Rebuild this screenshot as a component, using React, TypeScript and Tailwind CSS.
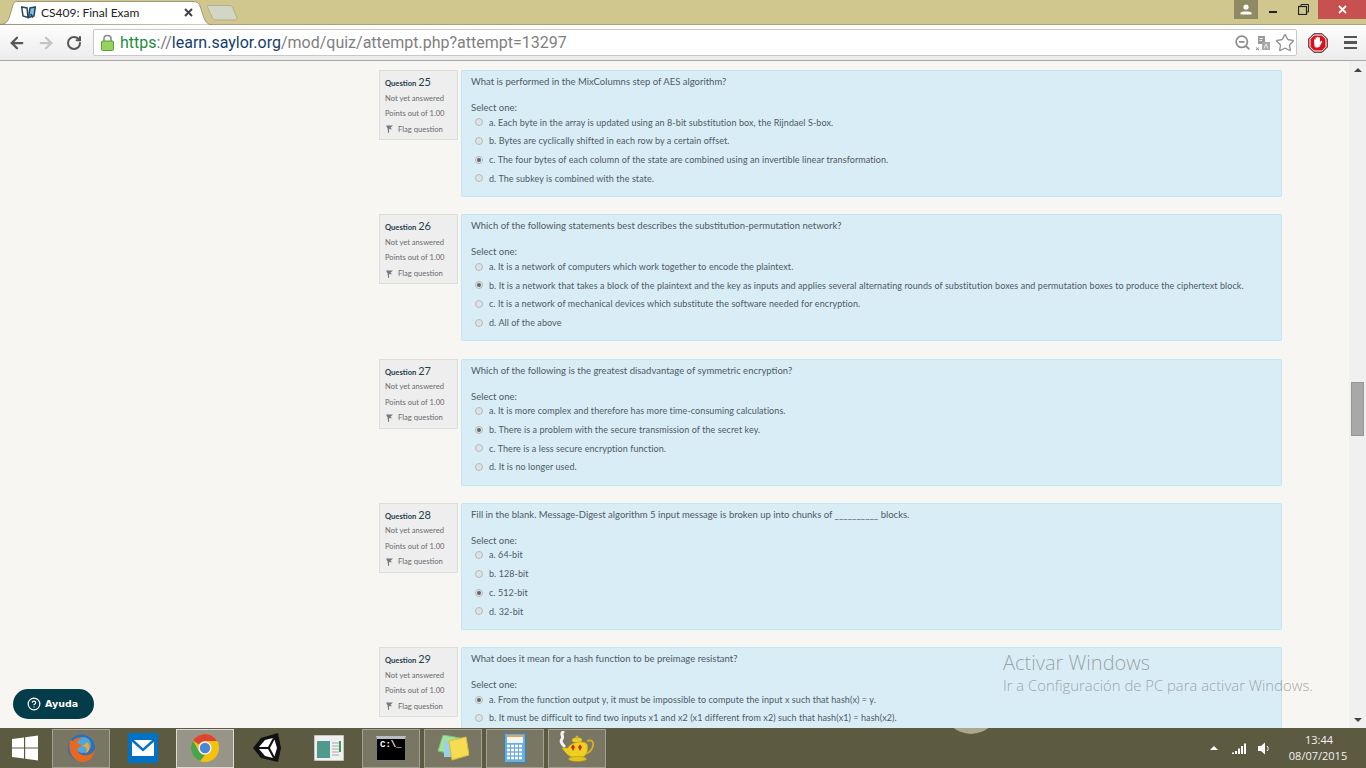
import { ArrowLeft, ArrowRight, CircleHelp, RotateCw, Star, ZoomOut } from "lucide-react";

const questions = [
    {
        number: 25,
        text: "What is performed in the MixColumns step of AES algorithm?",
        selected: 2,
        options: [
            "a. Each byte in the array is updated using an 8-bit substitution box, the Rijndael S-box.",
            "b. Bytes are cyclically shifted in each row by a certain offset.",
            "c. The four bytes of each column of the state are combined using an invertible linear transformation.",
            "d. The subkey is combined with the state.",
        ],
    },
    {
        number: 26,
        text: "Which of the following statements best describes the substitution-permutation network?",
        selected: 1,
        options: [
            "a. It is a network of computers which work together to encode the plaintext.",
            "b. It is a network that takes a block of the plaintext and the key as inputs and applies several alternating rounds of substitution boxes and permutation boxes to produce the ciphertext block.",
            "c. It is a network of mechanical devices which substitute the software needed for encryption.",
            "d. All of the above",
        ],
    },
    {
        number: 27,
        text: "Which of the following is the greatest disadvantage of symmetric encryption?",
        selected: 1,
        options: [
            "a. It is more complex and therefore has more time-consuming calculations.",
            "b. There is a problem with the secure transmission of the secret key.",
            "c. There is a less secure encryption function.",
            "d. It is no longer used.",
        ],
    },
    {
        number: 28,
        text: "Fill in the blank. Message-Digest algorithm 5 input message is broken up into chunks of __________ blocks.",
        selected: 2,
        options: ["a. 64-bit", "b. 128-bit", "c. 512-bit", "d. 32-bit"],
    },
    {
        number: 29,
        text: "What does it mean for a hash function to be preimage resistant?",
        selected: 0,
        options: [
            "a. From the function output y, it must be impossible to compute the input x such that hash(x) = y.",
            "b. It must be difficult to find two inputs x1 and x2 (x1 different from x2) such that hash(x1) = hash(x2).",
        ],
    },
];

function Radio({ checked }: { checked: boolean }) {
    return (
        <span className="w-[8px] h-[8px] rounded-full border border-[#b4babd] bg-[#dfe3e5] flex items-center justify-center shrink-0">
            {checked && <span className="w-[4px] h-[4px] rounded-full bg-[#666]" />}
        </span>
    );
}

function Question({ number, text, selected, options }: (typeof questions)[number]) {
    return (
        <div className="flex gap-[3px] mb-[17.3px] items-start">
            <div className="w-[79px] h-[70px] shrink-0 bg-[#eeeeee] border border-[#dddddd] pl-[5px] pt-[3px] text-[7.6px] leading-[15.5px] text-[#6b6b6b]">
                <div className="h-[16.5px] text-[#1d3f4c] font-bold">
                    Question <span className="text-[11px] font-normal">{number}</span>
                </div>
                <div>Not yet answered</div>
                <div>Points out of 1.00</div>
                <div className="flex items-center gap-[5px] pl-[1px]">
                    <svg width="7" height="8" viewBox="0 0 7 8">
                        <path d="M0 0.5 H7 L4.6 2.5 L6 4.5 L3.2 3.8 L3 8 H2.2 L1.6 3.5 Z" fill="#777" />
                    </svg>
                    Flag question
                </div>
            </div>
            <div className="w-[821px] min-h-[127px] bg-[#d9edf7] border border-[#bce8f1] rounded-[2px] pl-[9px] pt-[4px] text-[9.5px] text-[#4f5a5f]">
                <div className="h-[14px] leading-[14px]">{text}</div>
                <div className="h-[14px] leading-[14px] mt-[12px]">Select one:</div>
                <div className="pl-[4px] -mt-[2px]">
                    {options.map((option, i) => (
                        <div key={option} className="flex items-center gap-[6px] h-[18.7px] text-[9px] tracking-[0.07px]">
                            <Radio checked={i === selected} />
                            <span className="whitespace-nowrap">{option}</span>
                        </div>
                    ))}
                </div>
            </div>
        </div>
    );
}

function Firefox() {
    return (
        <svg width="30" height="30" viewBox="0 0 30 30">
            <circle cx="15.5" cy="15" r="13.5" fill="#2f6fb5" />
            <circle cx="17" cy="12" r="8" fill="#4fa6de" />
            <path d="M4 8 C1 20 9 29 16 29 C25 29 29 21 29 15 C27 23 18 24 13 20 C10 17 12 13 16 13 C15 11 12 11 11 10 C12 7 14 6 16 5 C11 4 8 6 7 8 C6 7 5 7 4 8Z" fill="#e8681f" />
            <path d="M16 13 C21 13 22 18 19 21 C24 19 25 13 21 9 C20 11 18 12 16 13Z" fill="#f6a623" />
        </svg>
    );
}

function Chrome() {
    return (
        <svg width="28" height="28" viewBox="0 0 28 28">
            <circle cx="14" cy="14" r="14" fill="#f4c20d" />
            <path d="M14 0 A14 14 0 0 1 26.1 7 L14 7 A7 7 0 0 0 7.9 10.5 L2.1 6.5 A14 14 0 0 1 14 0Z" fill="#db4437" />
            <path d="M2.1 6.5 L8 17.5 A7 7 0 0 0 14 21 L9 27.1 A14 14 0 0 1 2.1 6.5Z" fill="#4aa44d" />
            <circle cx="14" cy="14" r="6.6" fill="#f2f2f2" />
            <circle cx="14" cy="14" r="5.2" fill="#4a87d6" />
        </svg>
    );
}

function Unity() {
    return (
        <svg width="28" height="30" viewBox="0 0 28 30">
            <path d="M0 15 L8 5 L25 0 L28 15 L25 29 L8 25Z" fill="#111" />
            <path d="M6 14 L12 7 L20 5 L15 14Z" fill="#fff" />
            <path d="M6 16 L15 16 L20 25 L12 23Z" fill="#fff" />
            <path d="M17 15 L21.5 6.5 L24 15 L21.5 23.5Z" fill="#fff" />
        </svg>
    );
}

function Teapot() {
    return (
        <svg width="36" height="34" viewBox="0 0 36 34">
            <path d="M4 1 C1 3 5 5 3 8 C1 10 3 13 5 15" fill="none" stroke="#f5f5f5" strokeWidth="3" strokeLinecap="round" />
            <path d="M28 10 C33 8 35 11 34 15 C33 19 29 22 26 23" fill="none" stroke="#d4b21a" strokeWidth="1.8" />
            <ellipse cx="18" cy="9" rx="5" ry="2.5" fill="#eacb2a" />
            <circle cx="18" cy="6" r="1.5" fill="#d4b21a" />
            <path d="M3 17 L9 17 C11 11 25 9 28 13 C30 18 27 25 24 26 H13 C9 25 6 21 3 17Z" fill="#efd022" stroke="#c5a512" strokeWidth="0.6" />
            <ellipse cx="18.5" cy="28" rx="9" ry="2.5" fill="#e4c21f" stroke="#b5980f" strokeWidth="0.5" />
            <path d="M12 16 L14 13.5 L16 16 L14 20Z M19 16 L21 13.5 L23 16 L21 20Z" fill="#cc2a1c" />
        </svg>
    );
}

function TaskSlot({ boxed, active, children }: { boxed?: boolean; active?: boolean; children?: React.ReactNode }) {
    return (
        <div
            className={`w-[58px] h-[39px] mr-[4px] flex items-center justify-center ${boxed ? "bg-[#797764] border border-[#a3a192]" : ""} ${active ? "!bg-[#97958a] !border-[#dedcd2]" : ""}`}
        >
            {children}
        </div>
    );
}

export default function App() {
    return (
        <div className="relative w-[1366px] h-[768px] overflow-hidden flex flex-col bg-[#f7f6f2] font-['Lato',sans-serif]">
            {/* window title bar + tabs */}
            <div className="relative h-[25px] bg-[#d0c78f] shrink-0 border-b border-[#a9a27a]">
                <svg className="absolute left-0 top-0" width="245" height="25" viewBox="0 0 245 25">
                    <path d="M0 24.5 C6 24 8 22 10 15 L13 5 C14 2 15 1.5 18 1.5 H193 C197 1.5 199 3 200 6 L203 15 C205 22 207 24 212 25 Z" fill="#ffffff" stroke="#8d8866" strokeWidth="0.8" />
                    <path d="M207 6 C207 5.5 208 5.5 209 5.5 H229 C231 5.5 232 6 233 8 L237 18 C237 19 236 20 235 20 H216 C214 20 213 19 212 17Z" fill="#d3d5c5" stroke="#a9a888" strokeWidth="0.8" />
                </svg>
                <svg className="absolute left-[21px] top-[6px]" width="15" height="13" viewBox="0 0 15 13">
                    <path d="M0.7 1 L6 2 L7 11.5 L2 10Z" fill="#fff" stroke="#24465c" strokeWidth="1.5" />
                    <path d="M14.3 1 L9 2 L7.5 11.5 L13 10Z" fill="#7cc0e2" stroke="#24465c" strokeWidth="1.5" />
                    <path d="M9.5 8 L12 11.5" stroke="#24465c" strokeWidth="1.5" />
                </svg>
                <span className="absolute left-[41px] top-[5px] text-[12px] leading-[16px] text-[#222] font-['Lato',sans-serif]">CS409: Final Exam</span>
                <span className="absolute left-[184px] top-[8px] w-[9px] h-[9px]">
                    <svg width="9" height="9" viewBox="0 0 9 9">
                        <path d="M1 1 L8 8 M8 1 L1 8" stroke="#444" strokeWidth="2" />
                    </svg>
                </span>
                <div className="absolute right-0 top-0 flex items-start">
                    <div className="w-[24px] h-[19px] bg-[#8f8a63] flex items-center justify-center">
                        <svg width="12" height="11" viewBox="0 0 12 11">
                            <circle cx="6" cy="3" r="2.6" fill="#fff" />
                            <path d="M0.5 10.5 V8.5 C2 7 10 7 11.5 8.5 V10.5Z" fill="#fff" />
                        </svg>
                    </div>
                    <div className="w-[30px] h-[19px] flex items-center justify-center pt-[5px]">
                        <span className="w-[8px] h-[2px] bg-[#222]" />
                    </div>
                    <div className="w-[30px] h-[19px] flex items-center justify-center">
                        <svg width="11" height="11" viewBox="0 0 11 11">
                            <path d="M3 2.5 V0.5 H10.5 V8 H8.5" fill="none" stroke="#222" />
                            <rect x="0.5" y="2.5" width="8" height="8" fill="none" stroke="#222" strokeWidth="1.2" />
                        </svg>
                    </div>
                    <div className="w-[48px] h-[19px] bg-[#c75050] flex items-center justify-center">
                        <svg width="9" height="9" viewBox="0 0 9 9">
                            <path d="M1 1 L8 8 M8 1 L1 8" stroke="#fff" strokeWidth="1.8" />
                        </svg>
                    </div>
                </div>
            </div>

            {/* toolbar */}
            <div className="h-[36px] shrink-0 bg-gradient-to-b from-[#fdfdfd] to-[#ececec] border-b border-[#a8a8a8] flex items-center pl-[8px]">
                <ArrowLeft size={18} strokeWidth={3} className="text-[#555]" />
                <ArrowRight size={18} strokeWidth={3} className="text-[#c4c4c4] ml-[11px]" />
                <RotateCw size={16} strokeWidth={3} className="text-[#555] ml-[11px]" />
                <div className="ml-[11px] w-[1204px] h-[27px] bg-white border border-[#c8c8c8] rounded-[2px] flex items-center pl-[7px]">
                    <svg width="13" height="17" viewBox="0 0 13 17">
                        <path d="M3 7 V4.5 C3 0.5 10 0.5 10 4.5 V7" fill="none" stroke="#8a8a8a" strokeWidth="1.6" />
                        <rect x="0.5" y="7" width="12" height="9.5" rx="1" fill="#97d160" stroke="#5f9e35" />
                    </svg>
                    <span className="ml-[6px] pt-[1px] text-[16px] font-['Roboto',sans-serif] whitespace-nowrap">
                        <span className="text-[#1e8e3e]">https</span>
                        <span className="text-[#7a7a7a]">://</span>
                        <span className="text-[#16406b]">learn.saylor.org</span>
                        <span className="text-[#808080]">/mod/quiz/attempt.php?attempt=13297</span>
                    </span>
                    <div className="ml-auto flex items-center gap-[5px] pr-[1px]">
                        <ZoomOut size={17} strokeWidth={2.4} className="text-[#8c8c8c]" />
                        <svg width="14" height="14" viewBox="0 0 14 14">
                            <rect x="2" y="0" width="7" height="8" fill="#9a9a9a" />
                            <path d="M3.5 2.5 H7 M3.5 4.5 H6" stroke="#eee" />
                            <rect x="6" y="6" width="8" height="8" fill="#a8a8a8" />
                            <path d="M8 12.5 L10 8 L12 12.5" fill="none" stroke="#eee" />
                            <path d="M0 11.5 L3 14 M3 11.5 L0 14" stroke="#888" />
                        </svg>
                        <Star size={20} strokeWidth={1.6} className="text-[#8f8f8f]" />
                    </div>
                </div>
                <div className="ml-[11px] w-[20px] h-[20px] flex items-center justify-center">
                    <svg width="20" height="20" viewBox="0 0 20 20">
                        <path d="M6 0.5 H14 L19.5 6 V14 L14 19.5 H6 L0.5 14 V6Z" fill="#d9101c" stroke="#555" />
                        <path d="M6.2 2 H13.8 L18 6.2 V13.8 L13.8 18 H6.2 L2 13.8 V6.2Z" fill="none" stroke="#fff" />
                        <path d="M6 7 C6 6 7.5 6 7.5 7 V5 C7.5 4 9 4 9 5 V4.5 C9 3.5 10.5 3.5 10.5 4.5 V5 C10.5 4 12 4 12 5 V9 L13 8 C14 7.5 14.5 8.5 14 9 L12 13 C11 15 7 15 6.5 13Z" fill="#fff" />
                    </svg>
                </div>
                <div className="ml-[16px] flex flex-col gap-[3px]">
                    <span className="w-[13px] h-[2.5px] bg-[#555]" />
                    <span className="w-[13px] h-[2.5px] bg-[#555]" />
                    <span className="w-[13px] h-[2.5px] bg-[#555]" />
                </div>
            </div>

            {/* page */}
            <div className="flex-1 min-h-0 flex">
                <div className="flex-1 overflow-hidden pl-[379px] pt-[9px]">
                    {questions.map((q) => (
                        <Question key={q.number} {...q} />
                    ))}
                </div>
                <div className="w-[17px] shrink-0 bg-[#f0f0f0] flex flex-col items-center">
                    <div className="h-[17px] flex items-center justify-center">
                        <span className="border-x-[4px] border-x-transparent border-b-[4px] border-b-[#444]" />
                    </div>
                    <div className="w-[13px] h-[54px] mt-[304px] bg-[#a8a8a8] border border-[#969696]" />
                    <div className="mt-auto h-[17px] flex items-center justify-center">
                        <span className="border-x-[4px] border-x-transparent border-t-[4px] border-t-[#444]" />
                    </div>
                </div>
            </div>

            {/* taskbar */}
            <div className="relative h-[40px] shrink-0 bg-[#5d5a42] flex items-center">
                <div className="w-[52px] flex justify-center pr-[2px]">
                    <svg width="26" height="26" viewBox="0 0 26 26">
                        <path d="M0 4 L12 2.4 V12.4 H0Z M13.2 2.2 L26 0.4 V12.4 H13.2Z M0 13.6 H12 V23.6 L0 22Z M13.2 13.6 H26 V25.6 L13.2 23.8Z" fill="#fff" />
                    </svg>
                </div>
                <TaskSlot boxed><Firefox /></TaskSlot>
                <TaskSlot>
                    <svg width="30" height="30" viewBox="0 0 30 30">
                        <rect width="30" height="30" fill="#0072c6" />
                        <path d="M4 7 H26 V23 H4Z" fill="#fff" />
                        <path d="M4 7 L15 17 L26 7" fill="none" stroke="#0072c6" strokeWidth="2.4" />
                    </svg>
                </TaskSlot>
                <TaskSlot boxed active><Chrome /></TaskSlot>
                <TaskSlot><Unity /></TaskSlot>
                <TaskSlot>
                    <svg width="30" height="26" viewBox="0 0 30 26">
                        <rect width="30" height="26" fill="#f0f0f0" stroke="#999" />
                        <rect x="3" y="6" width="13" height="17" fill="#4f9a8c" />
                        <path d="M18 8 H25 M18 11 H25 M18 14 H25 M18 17 H25 M18 20 H25" stroke="#aaa" />
                        <rect x="25" y="6" width="2" height="11" fill="#3f9a5a" />
                    </svg>
                </TaskSlot>
                <TaskSlot boxed>
                    <div className="w-[30px] h-[25px] bg-black border border-[#777] border-t-[3px] border-t-[#b9bec4] pl-[3px] text-[9px] leading-[13px] text-white font-['Liberation_Mono',monospace] font-bold">
                        C:\_
                    </div>
                </TaskSlot>
                <TaskSlot boxed>
                    <svg width="32" height="26" viewBox="0 0 32 26">
                        <path d="M6 0 L23 3 L19 20 L1 16Z" fill="#a4e29a" stroke="#7fc07a" />
                        <rect x="7" y="6" width="14" height="16" fill="#9ad0ea" />
                        <path d="M12 6 L29 2 L32 20 L15 25Z" fill="#f5dc52" stroke="#d9bc35" />
                    </svg>
                </TaskSlot>
                <TaskSlot boxed>
                    <svg width="22" height="30" viewBox="0 0 22 30">
                        <rect x="0.5" y="0.5" width="21" height="29" rx="1" fill="#6aaedb" stroke="#3e80b0" />
                        <rect x="3" y="2" width="16" height="8" fill="#eef4f8" />
                        <rect x="3" y="2" width="16" height="2" fill="#f0a13c" />
                        <path d="M3 13 H19 M3 17 H19 M3 21 H19 M3 25 H19" stroke="#fff" strokeWidth="2.4" strokeDasharray="3 1" />
                    </svg>
                </TaskSlot>
                <TaskSlot boxed><Teapot /></TaskSlot>
                <div className="ml-auto flex items-center text-[#f2f2f2] pr-[18px] h-full">
                    <span className="border-x-[4px] border-x-transparent border-b-[4px] border-b-white mr-[13px]" />
                    <svg width="16" height="11" viewBox="0 0 16 11">
                        <path d="M1 9.5 H3 V11 H1Z M4 8 H6 V11 H4Z M7 5.5 H9 V11 H7Z M10 3 H12 V11 H10Z M13 0.5 H15 V11 H13Z" fill="#fff" />
                    </svg>
                    <svg className="ml-[11px]" width="12" height="13" viewBox="0 0 12 13">
                        <path d="M0 4 H3 L7 0.5 V12.5 L3 9 H0Z" fill="#fff" />
                        <path d="M9 4 C10.5 5.5 10.5 7.5 9 9" fill="none" stroke="#fff" />
                    </svg>
                    <div className="ml-[18px] w-[60px] text-center text-[11px] leading-[16px] font-['Open_Sans',sans-serif]">
                        <div className="pl-[2px]">13:44</div>
                        <div>08/07/2015</div>
                    </div>
                </div>
                <div className="absolute left-[943px] top-0 w-[56px] h-[6px] overflow-hidden">
                    <div className="w-[56px] h-[56px] -mt-[50px] rounded-full bg-[#aca88f]" />
                </div>
            </div>

            {/* floating help button */}
            <div className="absolute left-[13px] top-[689px] w-[81px] h-[30px] rounded-[15px] bg-[#053c4a] flex items-center pl-[14px] gap-[4px] text-white text-[9.5px] font-bold font-['DejaVu_Sans',sans-serif]">
                <CircleHelp size={14} strokeWidth={2} />
                Ayuda
            </div>

            {/* windows watermark */}
            <div className="absolute left-[1003px] top-[650px] pointer-events-none text-[#808080]/70 font-['Open_Sans',sans-serif] whitespace-nowrap">
                <div className="text-[20px] leading-[26px] font-light">Activar Windows</div>
                <div className="text-[14.85px] leading-[20px] -mt-[1px] font-light">Ir a Configuración de PC para activar Windows.</div>
            </div>
        </div>
    );
}
